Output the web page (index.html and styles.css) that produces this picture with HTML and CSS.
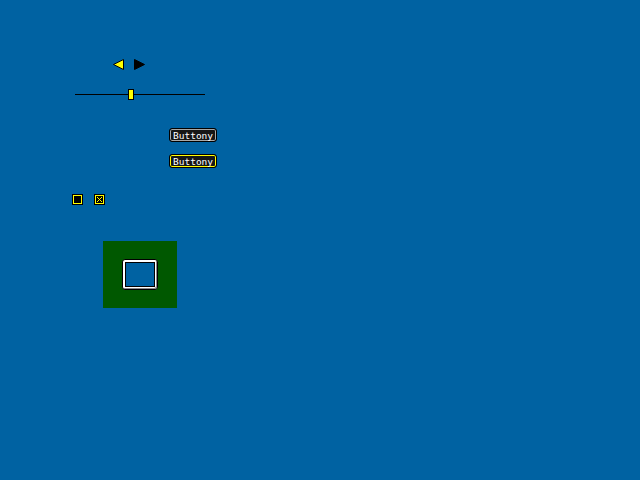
FILE: index.html
```html
<!DOCTYPE html>
<html>
<head>
<meta charset="utf-8">
<link rel="stylesheet" href="styles.css">
</head>
<body>
<div class="screen">
  <div class="arrows">
    <svg class="arrow" width="11" height="11" viewBox="0 0 11 11"><polygon points="10.5,0.5 10.5,10.5 0.5,5.5" fill="#ffff00" stroke="#000" stroke-width="1"/></svg>
    <svg class="arrow" width="11" height="11" viewBox="0 0 11 11"><polygon points="0.5,0.5 0.5,10.5 10.5,5.5" fill="#000" stroke="#000" stroke-width="1"/></svg>
  </div>
  <div class="slider">
    <div class="track"></div>
    <div class="thumb"></div>
  </div>
  <div class="buttons">
    <div class="btn">Buttony</div>
    <div class="btn focus">Buttony</div>
  </div>
  <div class="checks">
    <span class="check"></span>
    <span class="check checked"><svg width="5" height="5" viewBox="0 0 5 5"><path d="M0 0 L5 5 M5 0 L0 5" stroke="#ffff00" stroke-width="1"/></svg></span>
  </div>
  <div class="panel">
    <div class="frame"><div class="well"></div></div>
  </div>
</div>
</body>
</html>
```
FILE: styles.css
```css
html, body {
  margin: 0;
  padding: 0;
  background: #0062a2;
  width: 640px;
  height: 480px;
  overflow: hidden;
}
.screen {
  display: flex;
  flex-direction: column;
  align-items: flex-start;
  padding-top: 59px;
}
.arrows {
  display: flex;
  gap: 10px;
  margin-left: 113px;
  height: 11px;
}
.arrow { display: block; }
.slider {
  position: relative;
  margin-top: 19px;
  margin-left: 75px;
  width: 130px;
  height: 11px;
}
.track {
  position: absolute;
  left: 0;
  right: 0;
  top: 5px;
  height: 1px;
  background: #000;
}
.thumb {
  position: absolute;
  left: 53px;
  top: 0;
  width: 4px;
  height: 9px;
  background: #ffff00;
  border: 1px solid #000;
}
.buttons {
  display: flex;
  flex-direction: column;
  gap: 12px;
  margin-top: 28px;
  margin-left: 169px;
}
.btn {
  box-sizing: border-box;
  font-family: "DejaVu Sans Mono", monospace;
  font-size: 9.5px;
  line-height: 10px;
  color: #fff;
  background: #161616;
  border: 1px solid #000;
  border-radius: 3px;
  box-shadow: inset 0 0 0 1px #a8a8a8;
  padding: 2px 0 0 3px;
  width: 48px;
  height: 14px;
  overflow: hidden;
  white-space: nowrap;
}
.btn.focus {
  box-shadow: inset 0 0 0 1px #ffff00;
}
.checks {
  display: flex;
  gap: 11px;
  margin-top: 26px;
  margin-left: 72px;
}
.check {
  box-sizing: border-box;
  width: 11px;
  height: 11px;
  border: 1px solid #000;
  box-shadow: inset 0 0 0 1px #ffff00;
  background: #000;
  display: flex;
  align-items: center;
  justify-content: center;
}
.check svg { display: block; }
.panel {
  margin-top: 36px;
  margin-left: 103px;
  width: 74px;
  height: 67px;
  background: #005800;
  display: flex;
  align-items: center;
  justify-content: center;
}
.frame {
  box-sizing: border-box;
  width: 36px;
  height: 31px;
  border: 1px solid #000;
  border-radius: 3px;
  background: #fff;
  padding: 2px;
  box-shadow: inset -1px -1px 0 #8a8a8a;
  display: flex;
}
.well {
  flex: 1;
  background: #0062a2;
  border: 1px solid #000;
}
```
